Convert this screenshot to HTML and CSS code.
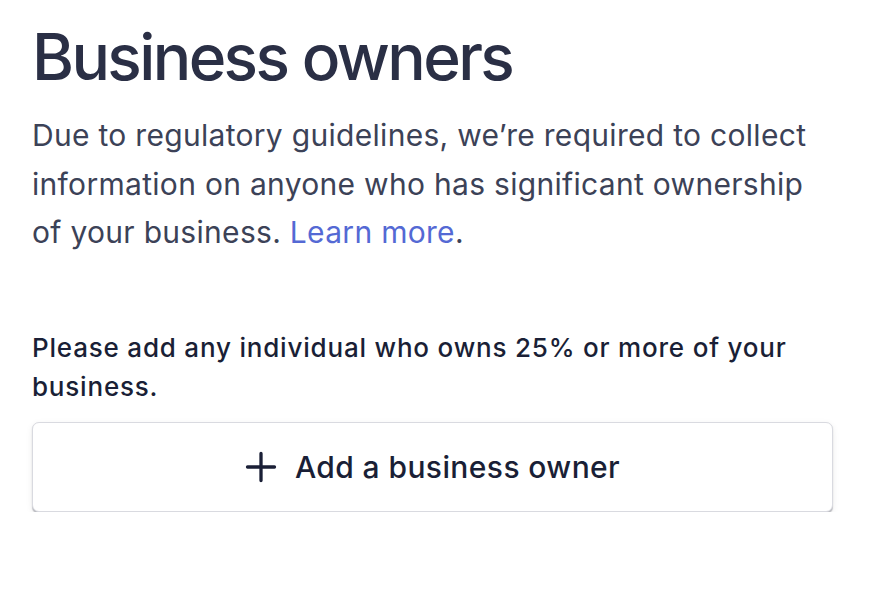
FILE: index.html
```html
<!DOCTYPE html>
<html lang="en">
<head>
<meta charset="utf-8">
<title>Business owners</title>
<link rel="stylesheet" href="styles.css">
</head>
<body>
<main class="page">
  <h1 class="title">Business owners</h1>
  <p class="intro">Due to regulatory guidelines, we’re required to collect information on anyone who has significant ownership of your business. <a class="link" href="#">Learn more</a>.</p>
  <p class="note">Please add any individual who owns 25% or more of your business.</p>
  <button class="add-btn" type="button">
    <svg class="plus" width="32" height="32" viewBox="0 0 32 32" aria-hidden="true"><path d="M16 2.5v27M2.5 16h27" stroke="currentColor" stroke-width="3.3" stroke-linecap="round" fill="none"/></svg>
    <span>Add a business owner</span>
  </button>
</main>
</body>
</html>
```
FILE: styles.css
```css
* { box-sizing: border-box; }
html, body { margin: 0; padding: 0; background: #ffffff; }
body { font-family: Inter, "Noto Sans", sans-serif; }
.page { padding: 19px 46px 0 32px; display: flex; flex-direction: column; }
.title {
  margin: 0;
  font-size: 64px;
  font-weight: 500;
  line-height: 76px;
  color: #2a2f45;
  letter-spacing: -2.6px;
}
.intro {
  margin: 16px 0 0 0;
  font-size: 30px;
  line-height: 48.5px;
  color: #3c4257;
  letter-spacing: 0.3px;
  max-width: 785px;
}
.link { color: #5469d4; text-decoration: none; }
.note {
  margin: 71px 0 0 0;
  font-size: 26px;
  line-height: 39px;
  font-weight: 500;
  color: #1a1f36;
  letter-spacing: 0.8px;
}
.add-btn {
  margin-top: 16px;
  width: 801px;
  height: 90px;
  display: flex;
  align-items: center;
  justify-content: center;
  gap: 18px;
  background: #ffffff;
  border: 1px solid #d9dae0;
  border-radius: 7px;
  box-shadow: 0 1.5px 1px rgba(40, 44, 60, 0.28), 0 2px 7px rgba(0, 0, 0, 0.07);
  font-family: Inter, "Noto Sans", sans-serif;
  font-size: 30px;
  font-weight: 500;
  letter-spacing: 0.4px;
  color: #1a1f36;
  padding: 0;
}
.plus { color: #1a1f36; display: block; }
```
